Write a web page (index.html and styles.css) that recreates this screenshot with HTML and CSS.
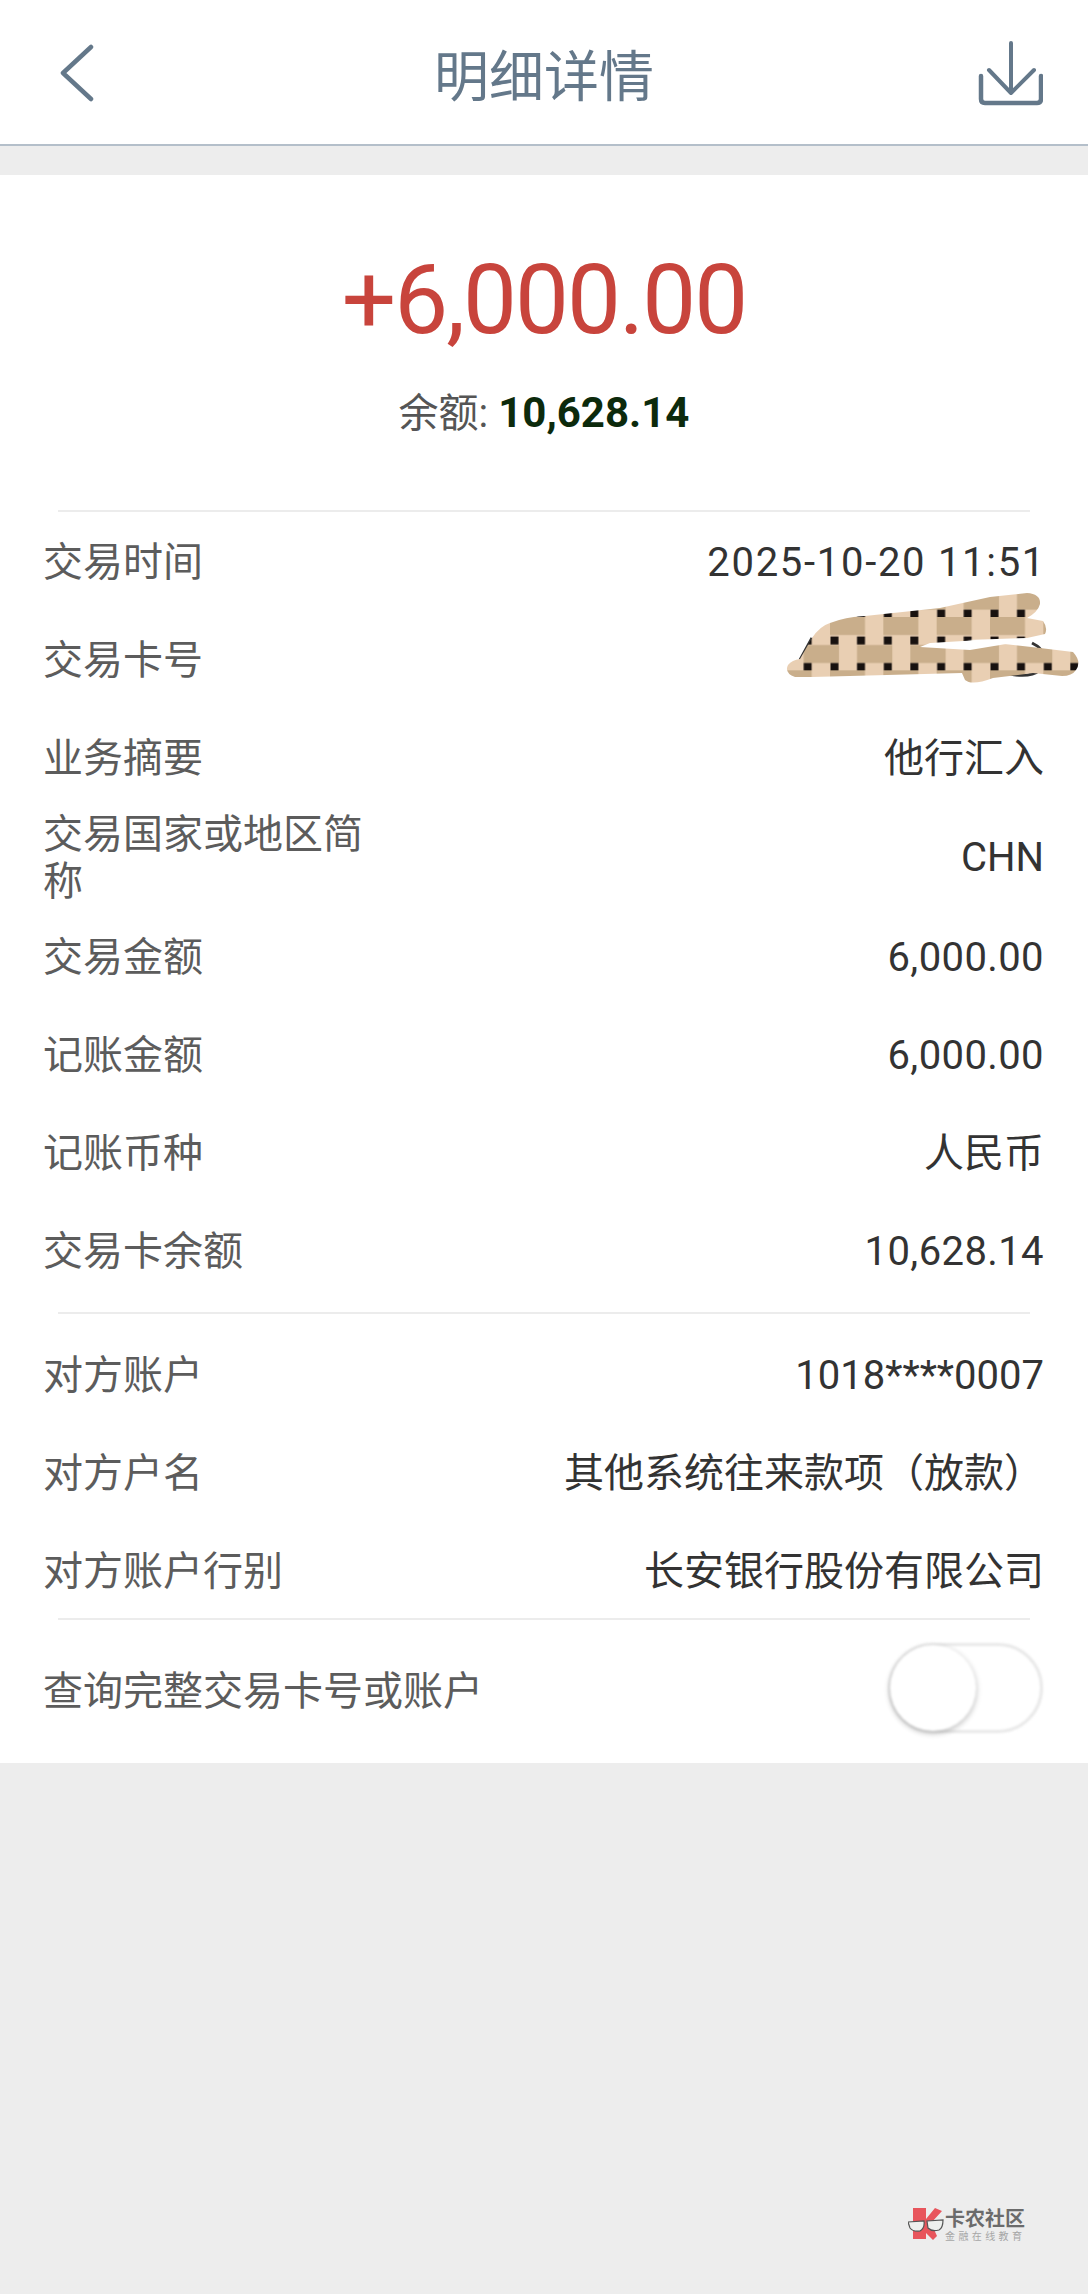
FILE: index.html
```html
<!DOCTYPE html>
<html lang="zh-CN">
<head>
    <meta charset="UTF-8">
    <meta name="viewport" content="width=device-width, initial-scale=1.0">
    <title>明细详情</title>
    <link rel="stylesheet" href="styles.css">
</head>
<body>

<div class="page">
    <header class="topbar">
        <svg class="icon-back" width="40" height="60" viewBox="0 0 40 60">
            <path d="M35 5 L7 31 L35 57" fill="none" stroke="#64788a" stroke-width="4.5" stroke-linecap="round" stroke-linejoin="round"/>
        </svg>
        <h1 class="title">明细详情</h1>
        <svg class="icon-save" width="68" height="68" viewBox="0 0 68 68">
            <path d="M36 5 V55 M14 32 L36 55 L59 32" fill="none" stroke="#64788a" stroke-width="4" stroke-linecap="round" stroke-linejoin="round"/>
            <path d="M6 38 V61 Q6 65 10 65 H62 Q66 65 66 61 V38" fill="none" stroke="#64788a" stroke-width="4.5" stroke-linecap="round"/>
        </svg>
    </header>

    <main class="card">
        <section class="hero">
            <div class="amount">+6,000.00</div>
            <div class="balance">余额: <b>10,628.14</b></div>
        </section>

        <div class="divider"></div>

        <section class="group group-trade">
            <div class="row"><span class="label">交易时间</span><span class="value date">2025-10-20 11:51</span></div>
            <div class="row">
                <span class="label">交易卡号</span>
                <svg class="scribble" width="348" height="130" viewBox="0 0 348 130">
                    <defs>
                        <pattern id="weave" width="53.33" height="53.33" patternUnits="userSpaceOnUse" patternTransform="translate(90 47)">
                            <rect width="53.33" height="53.33" fill="#e9cfb3"/>
                            <rect x="0" y="0" width="35" height="18" fill="#c9ae8b"/>
                            <rect x="27" y="28" width="35" height="18" fill="#c9ae8b"/>
                            <rect x="-26" y="28" width="35" height="18" fill="#c9ae8b"/>
                            <rect x="0.5" y="19.5" width="8" height="8" fill="#17110f"/>
                            <rect x="27" y="19.5" width="8" height="8" fill="#17110f"/>
                            <rect x="0.5" y="46" width="8" height="8" fill="#17110f"/>
                            <rect x="27" y="46" width="8" height="8" fill="#17110f"/>
                        </pattern>
                    </defs>
                    <path d="M60 90 L72 68 M292 73 Q302 78 303 84 M270 104 Q290 108 300 100" fill="none" stroke="#333" stroke-width="3"/>
                    <path d="M48 95 Q52 90 60 89 L72 68 Q80 56 90 53 Q105 47 125 46 L200 38 L250 27 L287 23 Q301 24 300 34 Q298 42 287 48 L303 51 Q308 58 305 64 L287 68 L227 70 L300 78 L333 82 Q342 92 336 100 Q332 106 322 106 L293 103 L253 108 Q232 116 225 110 L222 103 L72 107 L55 107 Q44 103 48 95 Z" fill="url(#weave)"/>
                    <path d="M180 77 L230 80 L290 70 L240 70 L190 73 Z" fill="#fff"/>
                </svg>
            </div>
            <div class="row"><span class="label">业务摘要</span><span class="value">他行汇入</span></div>
            <div class="row row-tall"><span class="label">交易国家或地区简称</span><span class="value">CHN</span></div>
            <div class="row"><span class="label">交易金额</span><span class="value num">6,000.00</span></div>
            <div class="row"><span class="label">记账金额</span><span class="value num">6,000.00</span></div>
            <div class="row"><span class="label">记账币种</span><span class="value">人民币</span></div>
            <div class="row"><span class="label">交易卡余额</span><span class="value num">10,628.14</span></div>
        </section>

        <div class="divider"></div>

        <section class="group group-peer">
            <div class="row"><span class="label">对方账户</span><span class="value">1018****0007</span></div>
            <div class="row"><span class="label">对方户名</span><span class="value">其他系统往来款项（放款）</span></div>
            <div class="row"><span class="label">对方账户行别</span><span class="value">长安银行股份有限公司</span></div>
        </section>

        <div class="divider"></div>

        <section class="toggle-row">
            <span class="label">查询完整交易卡号或账户</span>
            <span class="switch"><span class="knob"></span></span>
        </section>
    </main>

    <div class="watermark">
        <svg class="wm-logo" width="36" height="36" viewBox="0 0 36 36">
            <path d="M5 2 H18 V13 L27 2 L34 5 L23 17 L29 30 L25 34 L18 27 V33 H5 Z" fill="#e8555c"/>
            <path d="M0 16 L16 15 Q17 22 12 25 Q5 26 2 22 Z M19 15 L35 14 Q35 22 31 24 Q24 26 20 22 Z" fill="#eef0ee" stroke="#555" stroke-width="1.2"/>
        </svg>
        <div class="wm-text">
            <div class="wm-name">卡农社区</div>
            <div class="wm-sub">金融在线教育</div>
        </div>
    </div>
</div>

</body>
</html>
```

FILE: styles.css
```css
* {
    box-sizing: border-box;
}
body {
    margin: 0;
    background-color: #ededed;
    font-family: Roboto, "Noto Sans CJK SC", sans-serif;
}
.page {
    position: relative;
    height: 2294px;
    overflow: hidden;
}
.topbar {
    display: grid;
    grid-template-columns: 1fr auto 1fr;
    align-items: center;
    height: 146px;
    padding: 0 45px;
    background-color: #fff;
    border-bottom: 2px solid #b4bfca;
}
.icon-back {
    margin-left: 11px;
}
.icon-save {
    justify-self: end;
}
.title {
    margin: 0;
    font-size: 55px;
    font-weight: 400;
    color: #64788a;
}
.card {
    margin-top: 29px;
    background-color: #fff;
}
.hero {
    display: flex;
    flex-direction: column;
    align-items: center;
    height: 335px;
    padding-top: 75px;
}
.amount {
    font-size: 96px;
    line-height: 100px;
    letter-spacing: -2px;
    color: #c8443c;
}
.balance {
    margin-top: 38px;
    font-size: 40px;
    line-height: 50px;
    color: #555;
}
.balance b {
    font-size: 42px;
    color: #0c2a0c;
}
.divider {
    height: 2px;
    margin: 0 58px;
    background-color: #ececec;
}
.group {
    padding: 0 44px 0 43px;
}
.group-trade {
    padding-top: 1px;
    padding-bottom: 12px;
}
.group-peer {
    height: 304px;
    padding-top: 12px;
}
.row {
    position: relative;
    display: flex;
    align-items: center;
    justify-content: space-between;
    height: 98px;
}
.row-tall {
    height: 101px;
}
.label {
    max-width: 330px;
    font-size: 40px;
    line-height: 47px;
    color: #5c5c5c;
}
.value {
    font-size: 40px;
    line-height: 47px;
    color: #333;
}
.num {
    letter-spacing: 0.4px;
}
.date {
    margin-right: -2px;
    letter-spacing: 1.7px;
}
.scribble {
    position: absolute;
    top: -41px;
    right: -44px;
}
.toggle-row {
    display: flex;
    align-items: center;
    justify-content: space-between;
    height: 143px;
    padding: 0 45px 0 43px;
}
.toggle-row .label {
    max-width: none;
}
.switch {
    display: block;
    width: 155px;
    height: 90px;
    margin-bottom: 7px;
    border: 3px solid #e8e8e8;
    border-radius: 45px;
    background-color: #fff;
    filter: blur(0.8px);
}
.knob {
    display: block;
    width: 86px;
    height: 86px;
    margin: -1px;
    border-radius: 50%;
    background-color: #fff;
    box-shadow: 0 2px 5px 1px rgba(0, 0, 0, 0.22);
}
.watermark {
    position: absolute;
    left: 908px;
    top: 2206px;
    display: flex;
    gap: 1px;
}
.wm-text {
    padding-top: 2px;
}
.wm-name {
    font-size: 20px;
    line-height: 22px;
    font-weight: 700;
    color: #6b6b6b;
}
.wm-sub {
    font-size: 10px;
    line-height: 14px;
    letter-spacing: 3.4px;
    color: #a6a6a6;
}
```
